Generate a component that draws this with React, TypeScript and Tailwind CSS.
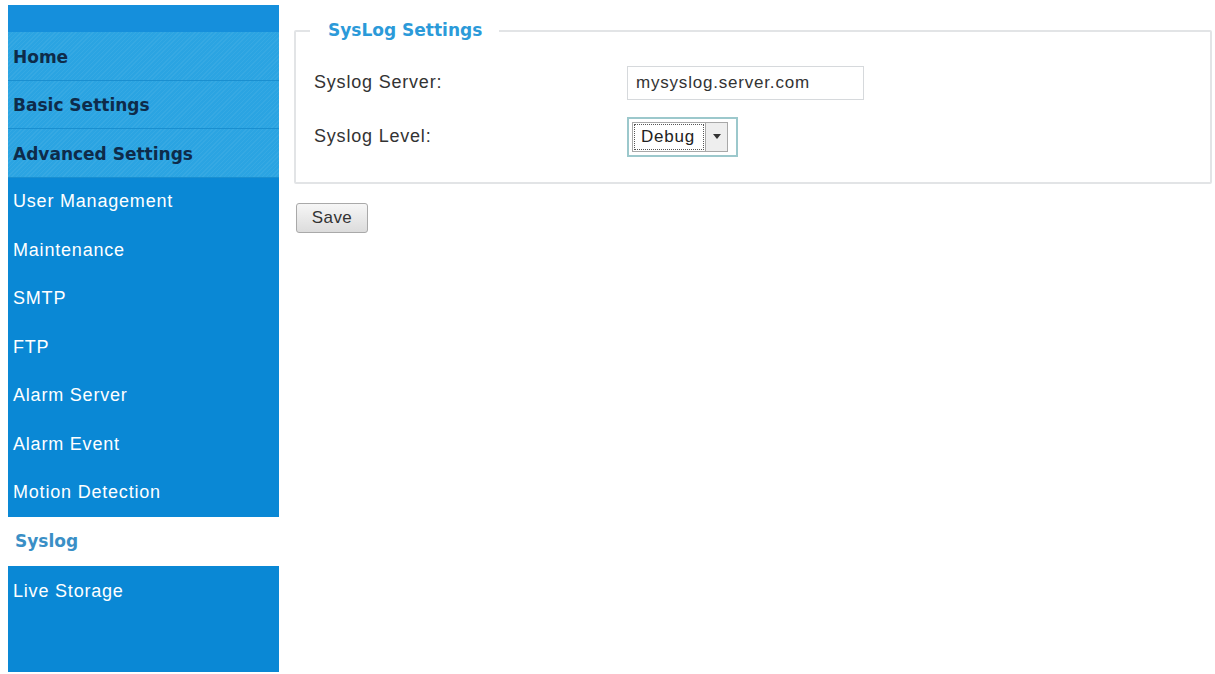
import React from "react";

const headerItems = ["Home", "Basic Settings", "Advanced Settings"];
const subItems = [
  "User Management",
  "Maintenance",
  "SMTP",
  "FTP",
  "Alarm Server",
  "Alarm Event",
  "Motion Detection",
];

function HeaderItem({ label }: { label: string }) {
  return (
    <div className="h-[48.5px] flex items-center pl-[5px] pt-[3px] bg-[#2ba4e2] bg-[repeating-linear-gradient(135deg,rgba(255,255,255,0.05)_0px,rgba(255,255,255,0.05)_1px,transparent_1px,transparent_3px)] border-b border-[#1a8fd0] font-['DejaVu_Sans',sans-serif] font-bold text-[17px] text-[#0e2b4a] tracking-[0px]">
      {label}
    </div>
  );
}

function SubItem({ label }: { label: string }) {
  return (
    <div className="h-[48.5px] flex items-center pl-[5px] text-white text-[18px] font-['Liberation_Sans',Arial,sans-serif] tracking-[0.8px]">
      {label}
    </div>
  );
}

export default function App() {
  return (
    <div className="w-[1215px] h-[674px] bg-white flex overflow-hidden">
      {/* left navigation */}
      <div className="w-[271px] ml-[8px] mt-[5px] flex flex-col shrink-0">
        <div className="h-[27px] bg-[#158fdc]" />
        {headerItems.map((h) => (
          <HeaderItem key={h} label={h} />
        ))}
        <div className="bg-[#0a88d5]">
          {subItems.map((s) => (
            <SubItem key={s} label={s} />
          ))}
        </div>
        <div className="h-[49px] flex items-center pl-[7px] bg-white font-['DejaVu_Sans',sans-serif] font-bold text-[17px] text-[#3a8fc6]">
          Syslog
        </div>
        <div className="flex-1 mb-[2px] bg-[#0a88d5] pt-[12px] pl-[5px] text-white text-[18px] font-['Liberation_Sans',Arial,sans-serif] tracking-[0.8px]">
          Live Storage
        </div>
      </div>

      {/* main content */}
      <div className="flex-1 pl-[15px] pr-[3px] pt-[18px] font-['Liberation_Sans',Arial,sans-serif]">
        <fieldset className="border-2 border-[#e2e4e6] rounded-[2px] px-[18px] pb-[14px] pt-[2px] h-[166px]">
          <legend className="ml-[-4px] pl-[18px] pr-[17px] text-[17px] font-bold text-[#2b9ad9] font-['DejaVu_Sans',sans-serif]">
            SysLog Settings
          </legend>
          <div className="flex items-center h-[34px] mt-[20px]">
            <label className="w-[313px] text-[18px] text-[#333] tracking-[0.8px]">Syslog Server:</label>
            <div className="w-[237px] h-[34px] border border-[#d6d9dc] flex items-center pl-[8px] text-[17px] text-[#333] tracking-[0.8px]">
              mysyslog.server.com
            </div>
          </div>
          <div className="flex items-center h-[40px] mt-[17px]">
            <label className="w-[313px] text-[18px] text-[#333] tracking-[0.8px]">Syslog Level:</label>
            <div className="w-[111px] h-[40px] border-2 border-[#9cc8cc] flex items-center px-[3px]">
              <div className="flex items-stretch h-[30px] border border-[#a8a8a8] bg-white">
                <div className="border border-dotted border-[#555] pl-[6px] pr-[8px] flex items-center text-[17px] text-[#222] tracking-[0.8px] m-[1px]">
                  Debug
                </div>
                <div className="w-[22px] border-l border-[#a8a8a8] bg-[#eeeeee] flex items-center justify-center">
                  <svg width="8" height="5" viewBox="0 0 8 5">
                    <path d="M0 0 L8 0 L4 5 Z" fill="#333" />
                  </svg>
                </div>
              </div>
            </div>
          </div>
        </fieldset>
        <button className="mt-[19px] ml-[2px] w-[72px] h-[30px] border border-[#a9a9a9] rounded-[3px] bg-[linear-gradient(#f6f6f6,#dcdcdc)] text-[17px] text-[#333] tracking-[0.4px]">
          Save
        </button>
      </div>
    </div>
  );
}
